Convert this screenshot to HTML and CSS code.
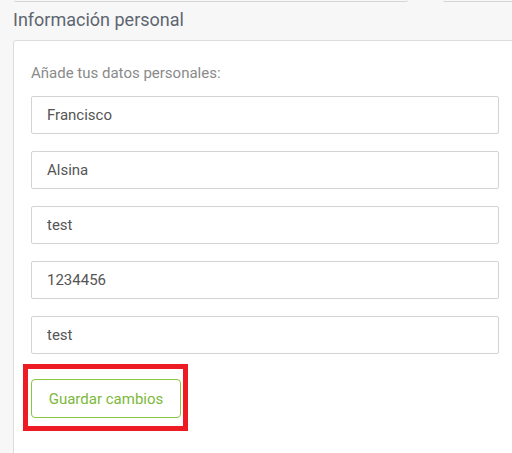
FILE: index.html
```html
<!DOCTYPE html>
<html lang="es">

<head>
    <meta charset="UTF-8">
    <title>Información personal</title>
    <link rel="stylesheet" href="styles.css">
</head>

<body>
    <div class="top-strip">
        <div class="strip-box strip-left"></div>
        <div class="strip-box strip-right"></div>
    </div>
    <h2 class="section-title">Información personal</h2>
    <div class="panel">
        <form id="personal-form">
            <p class="hint">Añade tus datos personales:</p>
            <input class="field" type="text" name="name" value="Francisco">
            <input class="field" type="text" name="surname" value="Alsina">
            <input class="field" type="text" name="city" value="test">
            <input class="field" type="text" name="phone" value="1234456">
            <input class="field" type="text" name="address" value="test">
            <div class="highlight">
                <button class="btn-save" type="submit">Guardar cambios</button>
            </div>
        </form>
    </div>
</body>

</html>
```

FILE: styles.css
```css
body {
    margin: 0;
    background: #f7f7f7;
    font-family: Roboto, "Liberation Sans", sans-serif;
    overflow: hidden;
}

.top-strip {
    display: flex;
    height: 2px;
}

.strip-box {
    height: 1px;
    border-bottom: 1px solid #d6d6d6;
    border-radius: 0 0 4px 4px;
    background: #f7f7f7;
}

.strip-left {
    margin-left: 14px;
    width: 394px;
}

.strip-right {
    margin-left: 35px;
    flex: 1;
    margin-right: -10px;
}

.section-title {
    margin: 6px 0 0 13px;
    font-size: 18px;
    line-height: 24px;
    font-weight: 400;
    color: #5d6670;
}

.panel {
    margin: 8px 0 0 13px;
    width: 468px;
    padding: 22px 18px 40px 17px;
    background: #fff;
    border: 1px solid #dcdcdc;
    border-radius: 3px 3px 0 0;
}

.hint {
    margin: 0 0 13px;
    font-size: 15px;
    line-height: 20px;
    color: #8a8a8a;
}

.field {
    display: block;
    box-sizing: border-box;
    width: 468px;
    height: 38px;
    margin: 0 0 17px;
    padding: 0 15px;
    border: 1px solid #d3d3d3;
    border-radius: 2px;
    font-family: Roboto, "Liberation Sans", sans-serif;
    font-size: 15px;
    color: #555;
    background: #fff;
}

.highlight {
    display: inline-block;
    margin: -7px 0 0 -8px;
    padding: 10px 2px 8px 3px;
    border: 5px solid #ed1c24;
}

.btn-save {
    display: block;
    box-sizing: border-box;
    width: 150px;
    height: 39px;
    border: 1px solid #8cc63f;
    border-radius: 4px;
    background: #fff;
    font-family: Roboto, "Liberation Sans", sans-serif;
    font-size: 15px;
    color: #7cb83a;
}
```
